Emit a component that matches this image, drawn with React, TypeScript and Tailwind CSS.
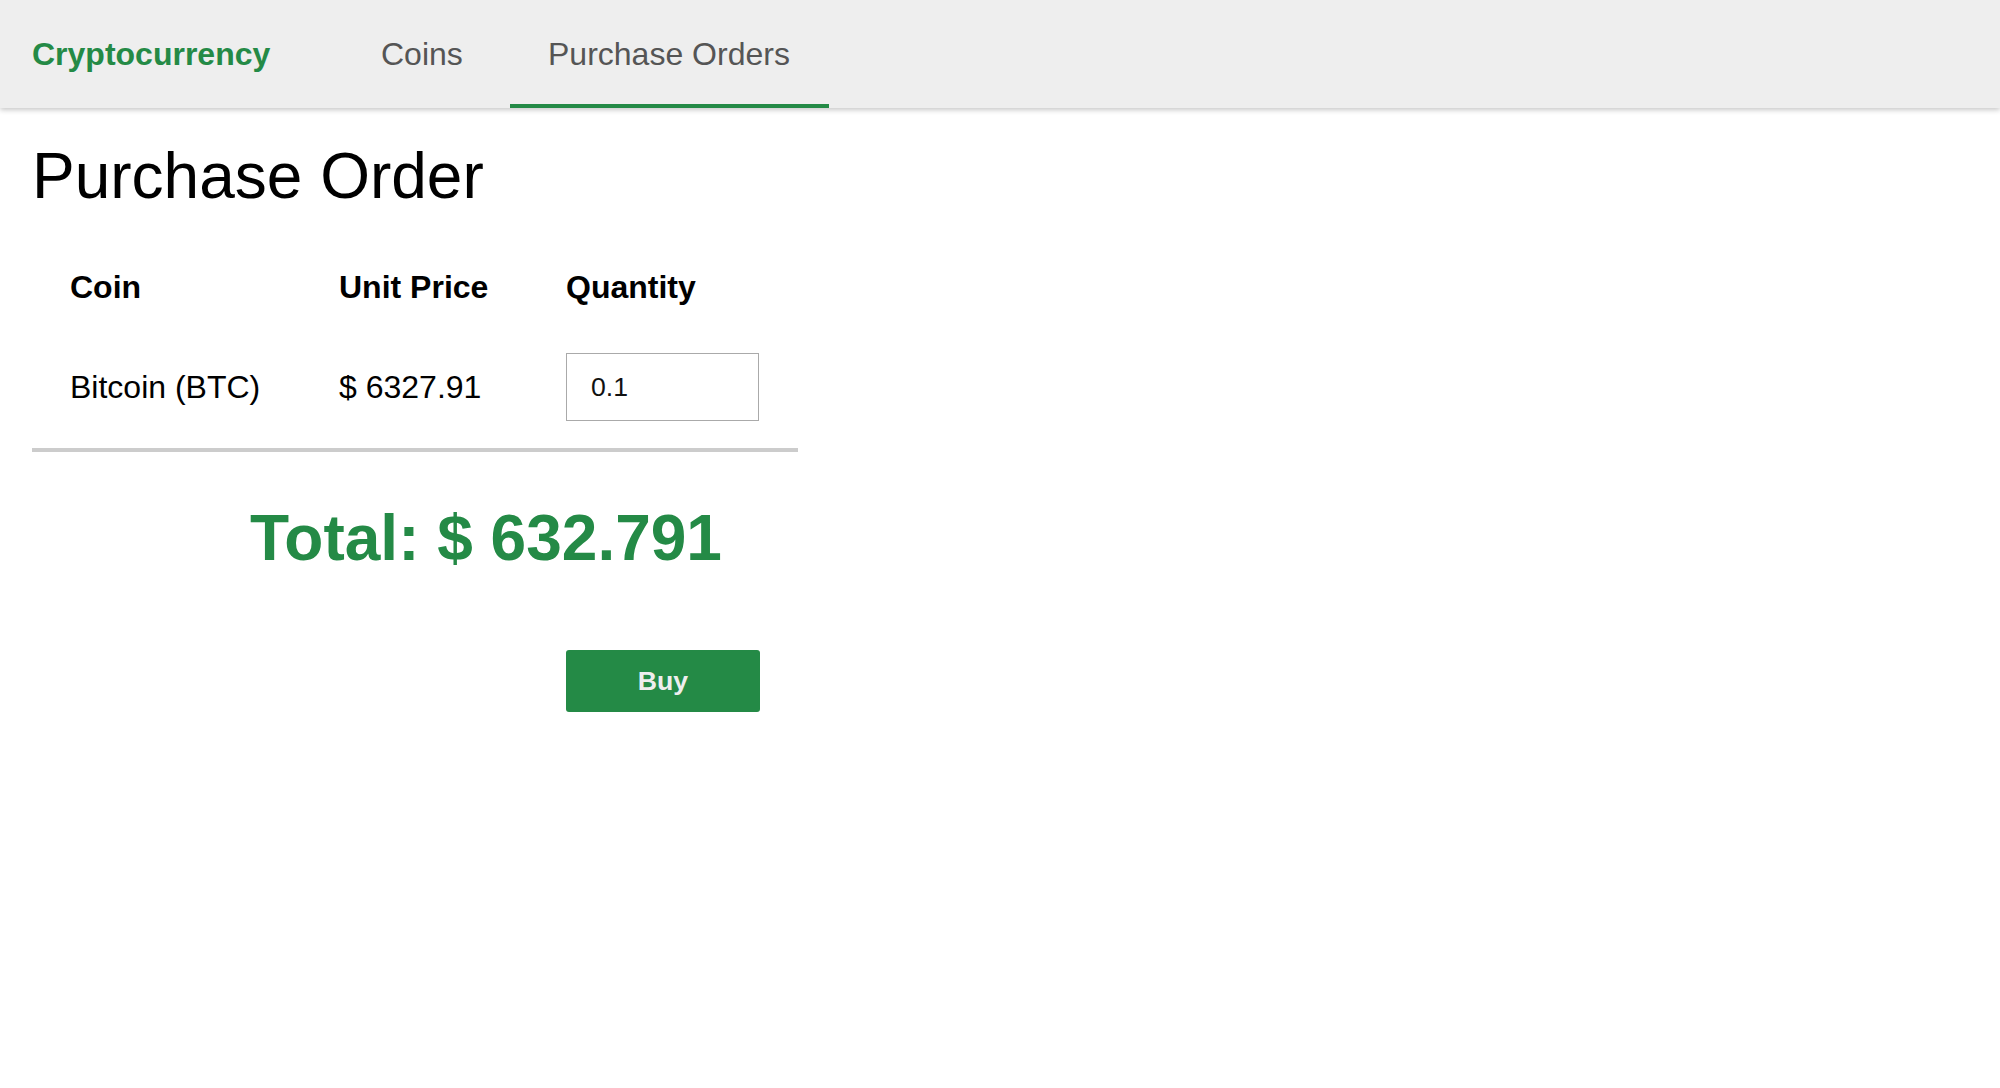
import { useState } from "react";

const Navbar = () => {
  return (
    <div className="w-full h-[108px] bg-[#eeeeee] shadow-[0_2px_5px_rgba(0,0,0,0.22)] relative z-10">
      <nav className="flex items-stretch h-full">
        <div className="w-[343px] pl-[32px] flex items-center">
          <span className="text-[32px] font-bold text-[#248a46]">Cryptocurrency</span>
        </div>
        <a className="w-[158px] pl-[38px] flex items-center text-[32px] text-[#555555] border-y-4 border-transparent">
          Coins
        </a>
        <a className="ml-[9px] w-[319px] pl-[38px] flex items-center text-[32px] text-[#555555] border-y-4 border-t-transparent border-b-[#248a46]">
          Purchase Orders
        </a>
      </nav>
    </div>
  );
};

const App = () => {
  const [qty, setQty] = useState("0.1");
  const price = 6327.91;
  const total = +(price * parseFloat(qty || "0")).toFixed(6);

  return (
    <div className="min-h-screen bg-white text-black font-['Liberation_Sans',Arial,sans-serif]">
      <Navbar />

      <main className="px-[32px] pt-[36px]">
        <h1 className="text-[64px] leading-[64px] font-normal">Purchase Order</h1>

        <div className="w-[766px] mt-[32px] pb-[8px] border-b-4 border-[#cccccc]">
          <div className="flex h-[94px] items-center text-[32px] font-bold leading-[40px]">
            <div className="w-[269px] pl-[38px]">Coin</div>
            <div className="w-[227px] pl-[38px]">Unit Price</div>
            <div className="w-[270px] pl-[38px]">Quantity</div>
          </div>
          <div className="flex h-[106px] items-center text-[32px] leading-[40px]">
            <div className="w-[269px] pl-[38px]">Bitcoin (BTC)</div>
            <div className="w-[227px] pl-[38px]">$ {price}</div>
            <div className="w-[270px] pl-[38px]">
              <input
                value={qty}
                onChange={(e) => setQty(e.target.value)}
                className="w-[193px] h-[68px] border border-[#aaaaaa] pl-[24px] text-[26.67px] text-[#111111] outline-none font-['Liberation_Sans',Arial,sans-serif]"
              />
            </div>
          </div>
        </div>

        <div className="mt-[54px] pl-[218px] text-[64px] leading-[64px] font-bold text-[#248a46]">
          Total: $ {total}
        </div>

        <div className="mt-[80px] pl-[534px]">
          <button className="w-[194px] h-[62px] rounded-[3px] bg-[#248a46] text-[#eeeeee] text-[26.67px] font-bold">
            Buy
          </button>
        </div>
      </main>
    </div>
  );
};

export default App;
